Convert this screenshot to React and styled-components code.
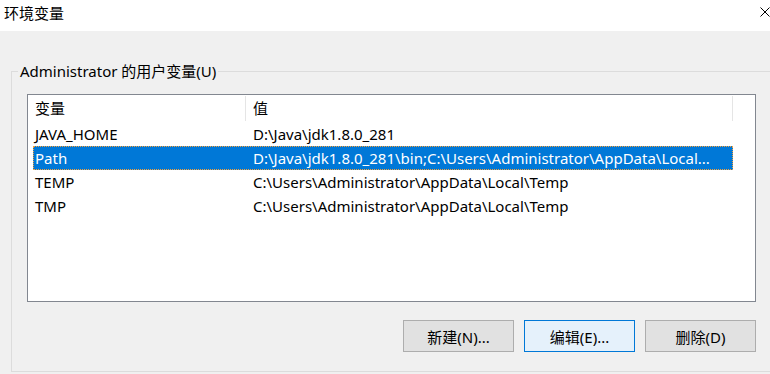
import React from "react";
import styled, { createGlobalStyle } from "styled-components";

const Global = createGlobalStyle`
  html, body { margin: 0; padding: 0; }
  body {
    background: #f0f0f0;
    overflow: hidden;
    width: 770px;
    height: 374px;
    font-family: "Noto Sans", "Noto Sans CJK SC", sans-serif;
    font-size: 15px;
    color: #000;
  }
  * { box-sizing: border-box; }
`;

const Window = styled.div`
  width: 770px;
  height: 374px;
  display: flex;
  flex-direction: column;
  overflow: hidden;
`;

const TitleBar = styled.div`
  height: 31px;
  flex: none;
  background: #fff;
  display: flex;
  align-items: flex-start;
  justify-content: space-between;
  padding-left: 4px;
`;

const TitleText = styled.span`
  line-height: 26px;
  font-family: "Noto Sans CJK SC", sans-serif;
  font-size: 15px;
`;

const CloseIcon = styled.svg`
  margin-top: 7px;
  width: 10px;
  height: 10px;
  display: block;
`;

const Group = styled.fieldset`
  margin: 30px 0 0 11px;
  padding: 0;
  width: 800px;
  border: 1px solid #dcdcdc;
  min-width: 0;
`;

const Legend = styled.legend`
  margin-left: 6px;
  padding: 0 2px;
  line-height: 20px;
  font-size: 15px;
`;

const GroupBody = styled.div`
  padding: 13px 0 19px 15px;
  display: flex;
  flex-direction: column;
  width: 744px;
`;

const List = styled.div`
  width: 729px;
  height: 208px;
  border: 1px solid #828790;
  background: #fff;
  display: flex;
  flex-direction: column;
`;

const Header = styled.div`
  display: flex;
  height: 27px;
  flex: none;
`;

const HeaderCell = styled.div`
  width: ${(p) => p.$w}px;
  flex: none;
  margin-top: 1px;
  height: 25px;
  line-height: 25px;
  padding-left: 7px;
  border-right: 1px solid #e5e5e5;
  white-space: nowrap;
`;

const Row = styled.div`
  display: flex;
  height: 24px;
  line-height: 24px;
  margin-left: 5px;
  width: 700px;
  background: ${(p) => (p.$selected ? "#0078d7" : "transparent")};
  color: ${(p) => (p.$selected ? "#fff" : "#000")};
  outline: ${(p) => (p.$selected ? "1px dotted #f7a13a" : "none")};
  outline-offset: -1px;
`;

const Cell = styled.div`
  width: ${(p) => p.$w}px;
  flex: none;
  padding-left: 2px;
  white-space: nowrap;
`;

const ButtonRow = styled.div`
  margin-top: 18px;
  display: flex;
  justify-content: flex-end;
  gap: 10px;
`;

const Button = styled.button`
  width: 111px;
  height: 32px;
  padding: 0;
  font-family: "Noto Sans", "Noto Sans CJK SC", sans-serif;
  font-size: 15px;
  color: #000;
  background: ${(p) => (p.$focused ? "#e5f1fb" : "#e1e1e1")};
  border: 1px solid ${(p) => (p.$focused ? "#0078d7" : "#adadad")};
  border-radius: 0;
`;

const rows = [
  { name: "JAVA_HOME", value: "D:\\Java\\jdk1.8.0_281" },
  {
    name: "Path",
    value: "D:\\Java\\jdk1.8.0_281\\bin;C:\\Users\\Administrator\\AppData\\Local...",
    selected: true,
  },
  { name: "TEMP", value: "C:\\Users\\Administrator\\AppData\\Local\\Temp" },
  { name: "TMP", value: "C:\\Users\\Administrator\\AppData\\Local\\Temp" },
];

export default function App() {
  return (
    <>
      <Global />
      <Window>
        <TitleBar>
          <TitleText>环境变量</TitleText>
          <CloseIcon viewBox="0 0 10 10">
            <path d="M0.5 0.5 L9.5 9.5 M9.5 0.5 L0.5 9.5" stroke="#000" strokeWidth="1" fill="none" />
          </CloseIcon>
        </TitleBar>
        <Group>
          <Legend>Administrator 的用户变量(U)</Legend>
          <GroupBody>
            <List>
              <Header>
                <HeaderCell $w={218}>变量</HeaderCell>
                <HeaderCell $w={487}>值</HeaderCell>
              </Header>
              {rows.map((r) => (
                <Row key={r.name} $selected={r.selected}>
                  <Cell $w={218}>{r.name}</Cell>
                  <Cell $w={482}>{r.value}</Cell>
                </Row>
              ))}
            </List>
            <ButtonRow>
              <Button>新建(N)...</Button>
              <Button $focused>编辑(E)...</Button>
              <Button>删除(D)</Button>
            </ButtonRow>
          </GroupBody>
        </Group>
      </Window>
    </>
  );
}
